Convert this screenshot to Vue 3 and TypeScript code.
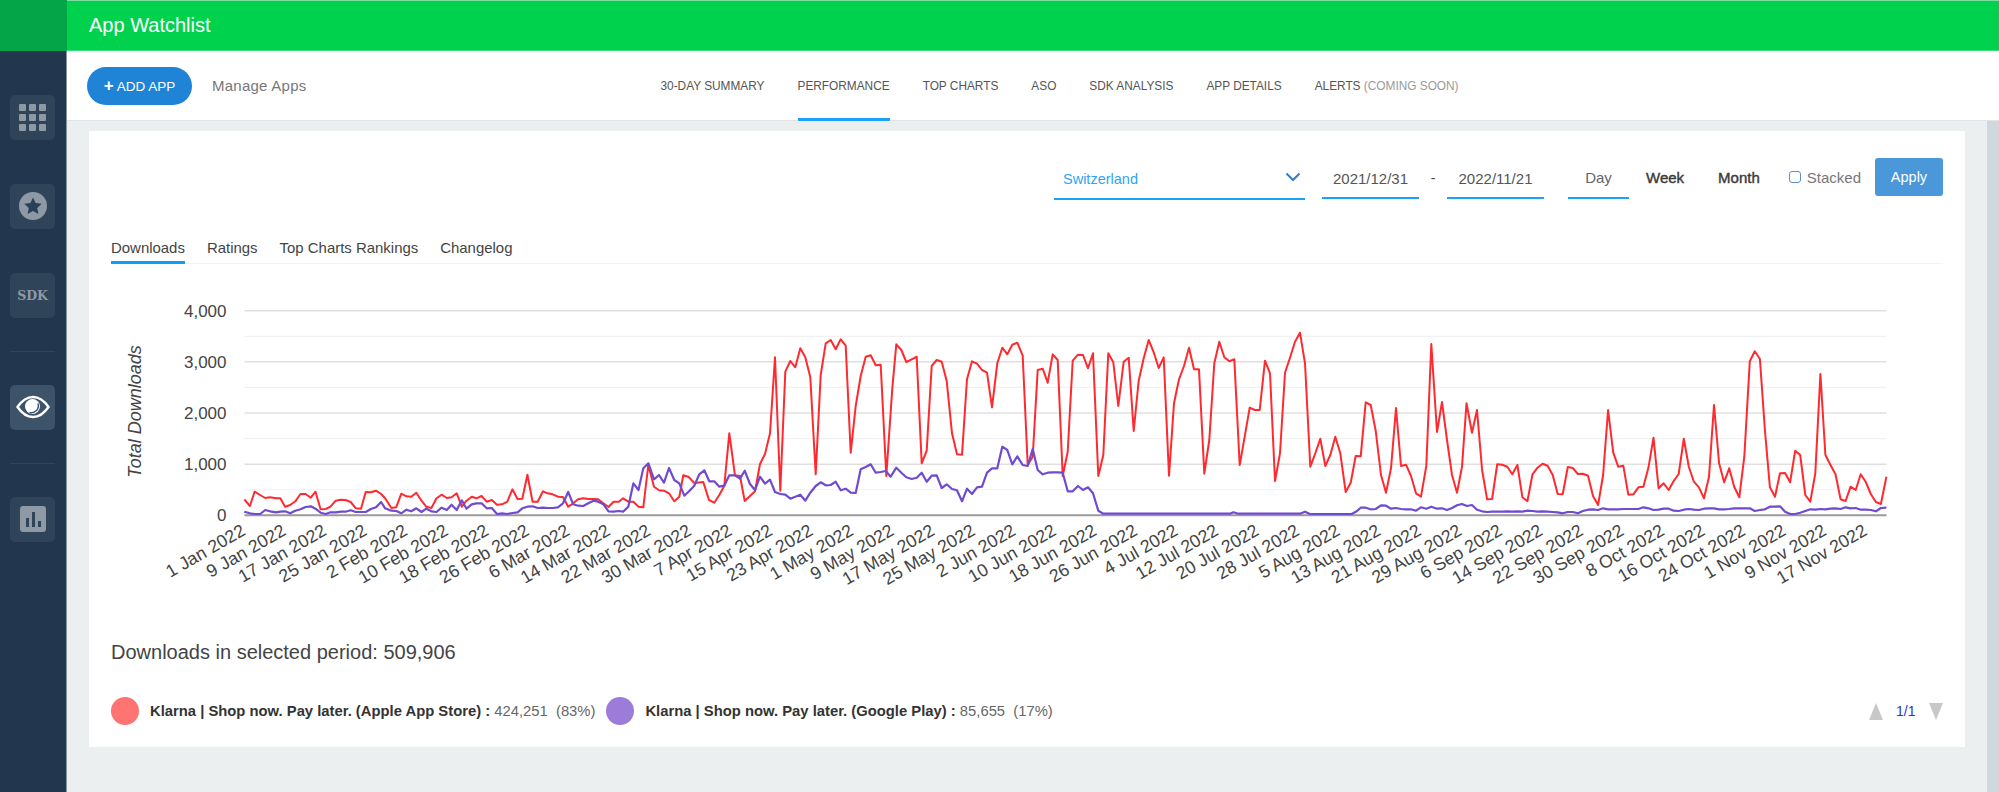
<script setup lang="ts">
type Seg = { ox: number; oy: number; fx: number; fy: number; pts: number[] }

const navItems = ['30-DAY SUMMARY', 'PERFORMANCE', 'TOP CHARTS', 'ASO', 'SDK ANALYSIS', 'APP DETAILS']
const tabs = ['Downloads', 'Ratings', 'Top Charts Rankings', 'Changelog']

const CHART = { left: 244.5, right: 1886.5, top: 310.7, bottom: 515.3, max: 4000 }
const dayStep = (CHART.right - CHART.left) / 324
const grid = [4000, 3500, 3000, 2500, 2000, 1500, 1000, 500].map((v) => ({
  v,
  y: CHART.bottom - (v / CHART.max) * (CHART.bottom - CHART.top),
  major: v % 1000 === 0,
}))
const yLabels = [4000, 3000, 2000, 1000, 0].map((v) => ({
  text: v.toLocaleString('en-US'),
  y: CHART.bottom - (v / CHART.max) * (CHART.bottom - CHART.top) + 6,
}))

const months = ['Jan', 'Feb', 'Mar', 'Apr', 'May', 'Jun', 'Jul', 'Aug', 'Sep', 'Oct', 'Nov', 'Dec']
const xLabels: { text: string; x: number }[] = []
for (let i = 0; i < 325; i += 8) {
  const d = new Date(Date.UTC(2022, 0, 1 + i))
  xLabels.push({ text: `${d.getUTCDate()} ${months[d.getUTCMonth()]} 2022`, x: CHART.left + i * dayStep })
}

const A = { ox: 100, oy: 290, fx: 1568 / 620, fy: 3 }
const B = { ox: 640, oy: 320, fx: 3, fy: 3 }
const C = { ox: 1050, oy: 320, fx: 3, fy: 3 }
const D = { ox: 1340, oy: 290, fx: 1568 / 659, fy: 3 }

const redSegs: Seg[] = [
  { ...A, pts: [365,628,379,648,391,605,405,615,418,624,430,622,445,625,456,625,468,650,481,645,494,634,507,612,520,612,533,623,545,605,558,658,571,657,583,650,596,632,609,629,621,630,634,636,647,655,660,656,672,606,685,607,698,602,711,612,721,625,737,654,749,652,762,611,775,619,787,620,800,608,813,632,825,650,838,654,851,625,864,614,877,624,889,622,902,610,915,650,927,632,940,620,952,625,965,618,978,635,991,630,1004,644,1017,643,1030,635,1043,598,1056,627,1068,626,1081,554,1094,635,1107,635,1120,604,1132,610,1145,613,1158,620,1171,621,1184,650,1197,640,1209,628,1222,625,1235,627,1248,627,1260,628,1273,640,1286,651,1299,635,1312,635,1323,625,1336,635,1349,635,1362,650,1374,652] },
  { ...B, pts: [25,435,42,500,57,511,72,512,87,520,103,544,118,530,130,466,146,471,163,489,190,486,207,540,223,548,238,525,253,497,268,340,285,466,300,468,314,543,330,528,345,514,360,432,375,402,390,340,405,112,421,512,436,155,451,123,466,142,481,85,496,112,511,172,527,463,542,165,557,70,572,60,587,88,602,58,617,77,632,398,647,258,662,168,677,110,692,106,707,136,722,134,739,468,757,205,769,73,784,90,799,126,815,118,830,110,845,430,860,392,875,138,890,120,905,125,920,183,936,340,951,403,966,404,981,178,996,124,1011,131,1026,150,1041,158,1056,262,1072,130,1087,83,1102,103,1117,74,1132,68,1148,107,1163,435,1178,410,1193,150,1208,146,1223,188] },
  { ...C, pts: [8,103,23,120,38,468,53,395,68,122,84,104,99,105,114,145,129,100,145,468,160,405,175,100,190,127,205,258,221,125,236,113,251,333,266,182,281,115,296,60,311,97,326,144,341,112,357,467,372,250,387,178,402,138,417,83,432,148,447,148,463,461,478,360,493,130,508,65,523,112,538,124,553,118,569,435,584,350,599,263,614,270,629,270,645,122,660,160,675,483,690,400,705,158,720,113,735,65,750,38,765,130,781,440,796,400,811,356,826,438,841,405,856,350,871,400,887,516,902,488,917,408,932,409,947,247,962,255,977,332,993,465,1008,518,1023,445,1038,264,1053,438,1068,434,1083,468,1098,520,1113,530,1129,438,1144,72,1161,336,1176,246,1191,360,1206,465,1221,518,1236,440] },
  { ...D, pts: [301,340,314,428,326,360,338,540,350,628,362,627,374,523,386,524,398,530,410,553,422,525,434,622,446,634,458,553,470,533,482,521,494,527,506,555,518,612,530,613,542,531,554,534,566,552,578,551,590,557,602,618,614,645,626,555,638,360,650,487,662,530,674,527,686,614,698,613,710,592,722,590,734,532,746,443,758,595,770,580,782,600,794,573,806,552,818,446,830,530,842,575,854,592,866,625,878,560,890,345,902,520,914,577,926,535,938,590,950,622,962,500,975,214,987,184,999,207,1011,420,1023,592,1035,620,1047,550,1059,549,1071,577,1083,482,1095,495,1107,615,1119,635,1131,550,1143,252,1155,495,1167,525,1179,553,1191,628,1203,633,1215,590,1227,600,1239,553,1251,576,1263,612,1275,636,1287,642,1300,560] },
]

const purpleSegs: Seg[] = [
  { ...A, pts: [365,665,379,670,391,672,405,672,418,660,430,664,445,667,456,665,468,664,481,670,494,662,507,658,520,651,533,649,545,656,558,668,571,672,583,667,596,667,609,665,621,665,634,661,647,666,660,666,672,666,685,657,698,652,711,636,721,655,737,662,749,663,762,670,775,659,787,664,800,655,813,666,825,656,838,664,851,666,864,653,877,660,889,644,902,660,915,631,927,656,940,643,952,640,965,640,978,655,991,654,1004,672,1017,670,1030,672,1043,669,1056,667,1068,655,1081,650,1094,649,1107,654,1120,653,1132,654,1145,654,1158,652,1171,640,1184,606,1197,643,1209,647,1222,648,1235,640,1248,632,1260,635,1273,643,1286,664,1299,665,1312,663,1323,665,1336,650,1349,580,1362,600,1374,535,1387,520] },
  { ...B, pts: [42,478,57,465,72,488,87,444,103,480,118,490,133,527,148,513,163,497,178,463,193,451,208,484,223,484,238,500,253,497,268,466,285,466,300,476,314,452,330,492,345,510,360,470,375,491,390,479,405,516,421,522,436,524,451,536,466,530,481,524,496,542,511,518,527,498,542,487,557,496,572,495,587,485,602,511,617,506,632,518,647,519,662,448,677,441,692,433,707,458,722,456,737,453,752,470,769,443,784,458,799,472,815,477,830,473,845,458,860,485,875,467,890,466,905,504,920,493,936,507,951,511,966,544,981,506,996,522,1011,502,1026,500,1041,458,1056,445,1072,445,1087,380,1102,390,1117,433,1132,409,1148,435,1163,438,1178,387,1193,450,1208,463,1223,458] },
  { ...C, pts: [8,457,23,457,38,458,53,514,68,514,84,498,99,510,114,502,129,520,145,572,160,581,540,581,550,577,565,581,750,581,765,575,780,582,895,582,905,582,920,574,932,563,947,563,962,568,977,567,993,556,1008,557,1023,566,1038,564,1053,567,1068,568,1083,568,1098,572,1113,562,1129,566,1144,560,1161,566,1176,565,1191,570,1206,564,1221,556,1236,552,1251,558] },
  { ...D, pts: [314,645,326,659,338,664,350,666,362,665,374,665,386,665,398,664,410,665,422,664,434,665,446,662,458,663,470,665,482,664,494,665,506,666,518,667,530,670,542,666,554,666,566,670,578,663,590,659,602,658,614,660,626,655,638,658,650,658,662,658,674,657,686,657,698,657,710,657,722,652,734,655,746,660,758,659,770,656,782,656,794,662,806,663,818,659,830,657,842,659,854,660,866,656,878,655,890,655,902,658,914,658,926,657,938,655,950,655,962,655,975,655,987,663,999,660,1011,658,1023,650,1035,650,1047,649,1059,665,1071,672,1083,672,1095,668,1107,663,1119,658,1131,659,1143,657,1155,658,1167,656,1179,655,1191,657,1203,652,1215,655,1227,654,1239,659,1251,659,1263,660,1275,664,1287,654,1300,653] },
]

function toPoints(segs: Seg[]): string {
  const out: string[] = []
  for (const s of segs) {
    for (let i = 0; i < s.pts.length; i += 2) {
      out.push(`${(s.ox + s.pts[i] / s.fx).toFixed(1)},${(s.oy + s.pts[i + 1] / s.fy).toFixed(1)}`)
    }
  }
  return out.join(' ')
}
const redPoints = toPoints(redSegs)
const purplePoints = toPoints(purpleSegs)
</script>

<template>
  <div class="app">
    <aside class="sidebar">
      <div class="brand"></div>
      <div class="rail">
        <div class="tile">
          <svg width="27" height="27" viewBox="0 0 27 27">
            <g fill="#8d9aa6">
              <rect x="0" y="0" width="7" height="7" rx="1" /><rect x="10" y="0" width="7" height="7" rx="1" /><rect x="20" y="0" width="7" height="7" rx="1" />
              <rect x="0" y="10" width="7" height="7" rx="1" /><rect x="10" y="10" width="7" height="7" rx="1" /><rect x="20" y="10" width="7" height="7" rx="1" />
              <rect x="0" y="20" width="7" height="7" rx="1" /><rect x="10" y="20" width="7" height="7" rx="1" /><rect x="20" y="20" width="7" height="7" rx="1" />
            </g>
          </svg>
        </div>
        <div class="tile">
          <svg width="28" height="28" viewBox="0 0 28 28">
            <circle cx="14" cy="14" r="14" fill="#8d9aa6" />
            <path d="M14 5.5l2.6 5.6 6.1.7-4.5 4.2 1.2 6-5.4-3-5.4 3 1.2-6-4.5-4.2 6.1-.7z" fill="#2b4056" />
          </svg>
        </div>
        <div class="tile"><span class="sdk">SDK</span></div>
        <div class="divider"></div>
        <div class="tile active">
          <svg width="34" height="24" viewBox="0 0 34 24">
            <path d="M1.500 12C6 5.500 11 2 17 2s11 3.500 15.500 10C28 18.500 23 22 17 22S6 18.500 1.500 12z" fill="none" stroke="#fff" stroke-width="2.400" />
            <circle cx="16.500" cy="11.500" r="7.500" fill="#fff" />
            <path d="M22 8.500a7 7 0 0 1-8.500 9" fill="none" stroke="#3d5369" stroke-width="1.500" />
          </svg>
        </div>
        <div class="divider"></div>
        <div class="tile">
          <svg width="26" height="26" viewBox="0 0 26 26">
            <rect width="26" height="26" rx="3" fill="#8d9aa6" />
            <rect x="6" y="12" width="3" height="9" fill="#2f4459" />
            <rect x="12" y="6" width="3" height="15" fill="#2f4459" />
            <rect x="18" y="15" width="3" height="6" fill="#2f4459" />
          </svg>
        </div>
      </div>
    </aside>

    <div class="main">
      <header class="topbar">App Watchlist</header>
      <div class="subnav">
        <button class="add-btn"><b class="plus">+</b> ADD APP</button>
        <span class="manage">Manage Apps</span>
        <nav class="nav">
          <span v-for="item in navItems" :key="item" class="nav-item" :class="{ current: item === 'PERFORMANCE' }">{{ item }}</span>
          <span class="nav-item">ALERTS <i class="soon">(COMING SOON)</i></span>
        </nav>
      </div>

      <div class="workspace">
        <div class="scroll">
          <section class="card">
            <div class="controls">
              <div class="country">
                <span>Switzerland</span>
                <svg width="16" height="10" viewBox="0 0 16 10"><path d="M1.500 1.500L8 8l6.500-6.500" fill="none" stroke="#2f7fc8" stroke-width="2" /></svg>
              </div>
              <div class="date">2021/12/31</div>
              <div class="dash">-</div>
              <div class="date">2022/11/21</div>
              <div class="period selected">Day</div>
              <div class="period">Week</div>
              <div class="period">Month</div>
              <label class="stacked"><span class="check"></span>Stacked</label>
              <button class="apply">Apply</button>
            </div>

            <div class="tabs">
              <span v-for="(tab, i) in tabs" :key="tab" class="tab" :class="{ current: i === 0 }">{{ tab }}</span>
            </div>

            <svg class="chart" width="1832" height="376" viewBox="111 264 1832 376">
              <line
                v-for="g in grid"
                :key="g.v"
                :x1="CHART.left"
                :x2="CHART.right"
                :y1="g.y"
                :y2="g.y"
                :stroke="g.major ? '#e0e0e0' : '#f1f1f1'"
                :stroke-width="g.major ? 1.500 : 1.200"
              />
              <line :x1="CHART.left" :x2="CHART.right" :y1="CHART.bottom" :y2="CHART.bottom" stroke="#9a9a9a" stroke-width="2" />
              <text v-for="l in yLabels" :key="l.text" x="226.500" :y="l.y" text-anchor="end" class="axis">{{ l.text }}</text>
              <text class="axis title" transform="translate(141 411.500) rotate(-90)" text-anchor="middle">Total Downloads</text>
              <polyline :points="redPoints" fill="none" stroke="#ff2a2f" stroke-width="2" stroke-linejoin="round" />
              <polyline :points="purplePoints" fill="none" stroke="#6f4bd0" stroke-width="2.200" stroke-linejoin="round" />
              <text
                v-for="l in xLabels"
                :key="l.text"
                class="axis xlabel"
                text-anchor="end"
                :transform="`translate(${l.x + 2} 534) rotate(-30)`"
              >{{ l.text }}</text>
            </svg>

            <div class="summary">Downloads in selected period: 509,906</div>

            <div class="legend">
              <span class="dot red"></span>
              <span class="entry"><b>Klarna | Shop now. Pay later. (Apple App Store) :</b> 424,251 &nbsp;(83%)</span>
              <span class="dot purple"></span>
              <span class="entry"><b>Klarna | Shop now. Pay later. (Google Play) :</b> 85,655 &nbsp;(17%)</span>
              <span class="pager">
                <i class="tri up"></i>
                <span class="page">1/1</span>
                <i class="tri down"></i>
              </span>
            </div>
          </section>
        </div>
        <div class="track"></div>
      </div>
    </div>
  </div>
</template>

<style>
html,
body {
  margin: 0;
  background: #ebeff0;
  overflow: hidden;
}
</style>

<style scoped>
.app {
  display: flex;
  width: 1999px;
  height: 792px;
  font-family: "Liberation Sans", Arial, sans-serif;
  color: #444;
  overflow: hidden;
}
.sidebar {
  width: 67px;
  flex: none;
  background: #22364d;
  display: flex;
  flex-direction: column;
}
.brand {
  height: 51px;
  flex: none;
  background: #04a548;
}
.rail {
  flex: 1;
  display: flex;
  flex-direction: column;
  align-items: center;
  padding: 44px 1px 0 0;
  border-right: 1px solid #8795a3;
}
.tile {
  width: 44.500px;
  height: 44.500px;
  border-radius: 5px;
  background: #2f4459;
  display: flex;
  align-items: center;
  justify-content: center;
  margin-bottom: 44.500px;
}
.tile.active {
  background: #3d5369;
}
.sdk {
  font-family: "DejaVu Serif", "Liberation Serif", serif;
  font-weight: 700;
  font-size: 12.500px;
  color: #8d9aa6;
}
.divider {
  width: 45px;
  height: 1px;
  background: #30465c;
  margin: -11px 0 33px;
}
.main {
  flex: 1;
  min-width: 0;
  display: flex;
  flex-direction: column;
}
.topbar {
  flex: none;
  height: 49px;
  background: #00d24e;
  border-top: 1px solid #7fdca0;
  border-bottom: 1px solid #3fdc7c;
  padding-left: 22px;
  color: #fff;
  font-size: 20px;
  line-height: 48px;
}
.subnav {
  height: 69px;
  flex: none;
  background: #fff;
  border-bottom: 1px solid #e1e4e6;
  display: flex;
  align-items: center;
  padding-left: 20px;
}
.add-btn {
  width: 105px;
  height: 38px;
  border: none;
  border-radius: 19px;
  background: #1f83d6;
  color: #fff;
  font: 13.500px "Liberation Sans", Arial, sans-serif;
  padding: 0;
}
.plus {
  font-size: 17px;
  line-height: 1;
}
.manage {
  margin-left: 20px;
  font-size: 15px;
  letter-spacing: 0.250px;
  color: #777;
}
.nav {
  display: flex;
  gap: 33px;
  margin-left: 354px;
  align-self: stretch;
}
.nav-item {
  font-size: 11.850px;
  color: #555;
  line-height: 71px;
  height: 67px;
  white-space: nowrap;
}
.nav-item.current {
  border-bottom: 3px solid #1ba1f5;
  border-radius: 1px;
}
.soon {
  font-style: normal;
  color: #9a9a9a;
}
.workspace {
  flex: 1;
  display: flex;
  min-height: 0;
}
.scroll {
  flex: 1;
  min-width: 0;
  padding: 10px 22px 0;
  background: #ebeff0;
}
.track {
  width: 12px;
  flex: none;
  background: #cfd8dc;
}
.card {
  background: #fff;
  height: 616px;
  padding: 27px 22px 0;
  box-sizing: border-box;
}
.controls {
  display: flex;
  height: 42px;
}
.country {
  margin-left: 943px;
  width: 251px;
  height: 42px;
  box-sizing: border-box;
  border-bottom: 2px solid #1ba1f5;
  padding: 0 4px 0 9px;
  display: flex;
  justify-content: space-between;
  color: #2ea4f7;
  font-size: 14.500px;
  line-height: 42px;
}
.country svg {
  margin-top: 14px;
}
.date {
  margin-left: 17px;
  width: 97px;
  height: 41px;
  box-sizing: border-box;
  border-bottom: 2px solid #1ba1f5;
  text-align: center;
  font-size: 15px;
  line-height: 42px;
  color: #555;
}
.dash + .date {
  margin-left: 0;
}
.dash {
  width: 28px;
  text-align: center;
  line-height: 40px;
  font-size: 14px;
}
.period {
  padding: 0 17px;
  height: 41px;
  line-height: 40px;
  font-size: 15px;
  color: #3a3a3a;
  -webkit-text-stroke: 0.400px #3a3a3a;
  box-sizing: border-box;
}
.period.selected {
  margin-left: 24px;
  color: #666;
  -webkit-text-stroke: 0;
  width: 61px;
  text-align: center;
  border-bottom: 2px solid #1ba1f5;
  padding: 0;
}
.stacked {
  margin-left: 12px;
  display: flex;
  align-items: center;
  height: 38px;
  font-size: 15px;
  color: #777;
}
.check {
  width: 12px;
  height: 12px;
  box-sizing: border-box;
  border: 1.500px solid #5b90c8;
  border-radius: 3px;
  margin-right: 6px;
}
.apply {
  margin-left: 14px;
  width: 68px;
  height: 38px;
  border: none;
  border-radius: 3px;
  background: #4a98da;
  color: #fff;
  font: 14.500px "Liberation Sans", Arial, sans-serif;
  padding: 0;
}
.tabs {
  margin-top: 37px;
  height: 26px;
  display: flex;
  gap: 22px;
  border-bottom: 1px solid #f3f3f3;
}
.tab {
  font-size: 14.950px;
  line-height: 22px;
  height: 24px;
  color: #444;
}
.tab.current {
  border-bottom: 3px solid #0aa0f5;
}
.chart {
  display: block;
}
.axis {
  font-family: "Liberation Sans", Arial, sans-serif;
  font-size: 17px;
  fill: #444;
}
.xlabel {
  font-size: 17.800px;
}
.title {
  font-style: italic;
  font-size: 18px;
}
.summary {
  font-size: 20px;
  line-height: 24px;
  color: #444;
}
.legend {
  margin-top: 33px;
  height: 28px;
  display: flex;
  align-items: center;
  font-size: 14.800px;
}
.dot {
  width: 28px;
  height: 28px;
  border-radius: 50%;
  flex: none;
  margin-right: 11px;
}
.dot.red {
  background: #ff7373;
}
.dot.purple {
  background: #9d7bd8;
}
.entry {
  margin-right: 11px;
  color: #666;
  white-space: nowrap;
}
.entry b {
  color: #333;
}
.pager {
  margin-left: auto;
  display: flex;
  align-items: center;
}
.page {
  color: #2a35d8;
  font-size: 14px;
  margin: 0 13.500px;
}
.tri {
  width: 0;
  height: 0;
  border-left: 7.500px solid transparent;
  border-right: 7.500px solid transparent;
}
.tri.up {
  border-bottom: 17px solid #c8c8c8;
}
.tri.down {
  border-top: 17px solid #c8c8c8;
}
</style>
